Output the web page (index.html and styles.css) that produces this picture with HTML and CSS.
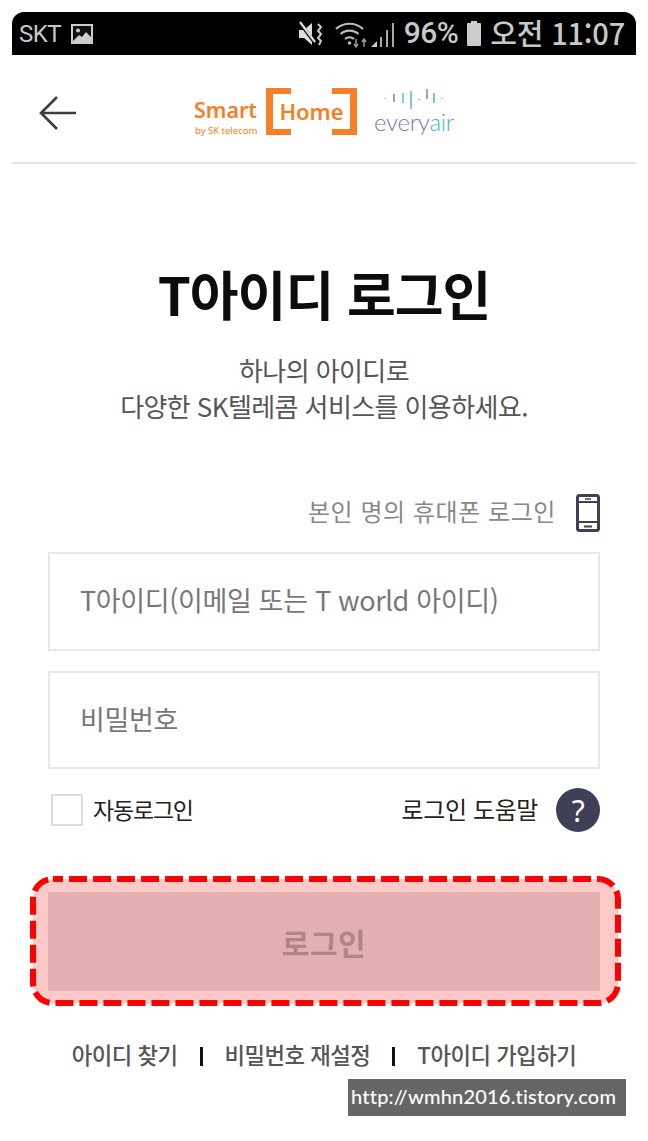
FILE: index.html
```html
<!DOCTYPE html>
<html lang="ko">
<head>
<meta charset="utf-8">
<title>T아이디 로그인</title>
<link rel="stylesheet" href="styles.css">
</head>
<body>
<div class="frame">
  <div class="status">
    <div class="status-left">
      <span class="carrier">SKT</span>
      <svg class="ico-pic" width="24" height="22" viewBox="0 0 24 22"><rect x="1" y="1" width="22" height="20" fill="#ccc"/><rect x="3" y="3" width="18" height="15" fill="#111"/><circle cx="8" cy="7.500" r="2" fill="#ccc"/><path d="M3 18l6-6 3 2 4-5 5 5v5H3z" fill="#ccc"/></svg>
    </div>
    <div class="status-right">
      <svg width="26" height="26" viewBox="0 0 26 26"><path d="M1 9h5l8-7v22l-8-7H1z" fill="#ddd"/><path d="M2 2l15 20" stroke="#000" stroke-width="3.500"/><path d="M2 1l15 20" stroke="#ddd" stroke-width="2.200"/><path d="M20 3l3 3-3 4 3 3-3 4 3 3-2 4" stroke="#ccc" stroke-width="2" fill="none"/></svg>
      <svg width="61" height="30" viewBox="0 0 61 30"><g fill="none" stroke="#bbb" stroke-width="2.200"><path d="M1 10a20 20 0 0 1 27 0"/><path d="M5.500 15a13.500 13.500 0 0 1 18 0"/><path d="M10 20a7 7 0 0 1 9 0"/></g><circle cx="14.500" cy="24" r="1.800" fill="#bbb"/><path d="M21 20v7M19 25l2 3 2-3M29 28v-7M27 23l2-3 2 3" stroke="#999" stroke-width="1.500" fill="none"/><path d="M36 28l6-6v6z" fill="#ccc"/><path d="M46 28V18M52 28V11M58 28V4" stroke="#aaa" stroke-width="2"/></svg>
      <span class="pct">96%</span>
      <svg width="16" height="25" viewBox="0 0 16 25"><rect x="5" y="0" width="6" height="3" fill="#ccc"/><rect x="1" y="2" width="14" height="23" rx="1" fill="#ccc"/></svg>
      <span class="clock">오전 11:07</span>
    </div>
  </div>

  <header class="topbar">
    <svg class="back" width="40" height="36" viewBox="0 0 40 36"><path d="M38 18H3M19 2L3 18l16 16" fill="none" stroke="#3c3c3c" stroke-width="2.600"/></svg>
    <div class="logos">
      <div class="sk">
        <span class="sk-smart">Smart</span>
        <span class="sk-by">by SK telecom</span>
      </div>
      <div class="home"><span>Home</span></div>
      <div class="every">
        <svg width="60" height="22" viewBox="0 0 60 22"><g fill="none" stroke-width="1.600"><path d="M1 11v1" stroke="#8fc4d4"/><path d="M10 7v8" stroke="#8a80b0"/><path d="M19 6v10" stroke="#6fbcc8"/><path d="M27 4v18" stroke="#5fb7c4"/><path d="M35 12v1" stroke="#8a80b0"/><path d="M43 2v10" stroke="#7f8fbb"/><path d="M50 6v10" stroke="#5fb7c4"/><path d="M58 11v1" stroke="#8fc4d4"/></g></svg>
        <span class="every-txt">every<em>air</em></span>
      </div>
    </div>
  </header>

  <main class="content">
    <h1 class="title">T아이디 로그인</h1>
    <p class="sub">하나의 아이디로<br>다양한 SK텔레콤 서비스를 이용하세요.</p>

    <div class="phone-login">
      <span class="phone-txt">본인 명의 휴대폰 로그인</span>
      <svg width="24" height="38" viewBox="0 0 24 38"><rect x="1.500" y="1.500" width="21" height="35" rx="2" fill="#fff" stroke="#3f3f57" stroke-width="3"/><path d="M2 8h20M2 28h20" stroke="#3f3f57" stroke-width="2"/><path d="M9 5h6" stroke="#3f3f57" stroke-width="1.500"/><path d="M8 32.500h8" stroke="#3f3f57" stroke-width="2"/></svg>
    </div>

    <div class="field field-id">T아이디(이메일 또는 T world 아이디)</div>
    <div class="field field-pw">비밀번호</div>

    <div class="opts">
      <div class="auto"><span class="check"></span><span class="opt-txt">자동로그인</span></div>
      <div class="help"><span class="opt-txt">로그인 도움말</span><span class="q">?</span></div>
    </div>

    <div class="btn-wrap">
      <svg class="mark" width="591" height="130" viewBox="0 0 591 130"><rect x="3" y="3" width="585" height="124" rx="20" fill="#ffc9c8" stroke="#fe0000" stroke-width="6" stroke-dasharray="18 6" stroke-dashoffset="-16"/></svg>
      <div class="btn">로그인</div>
    </div>

    <nav class="links">
      <span>아이디 찾기</span><i></i><span>비밀번호 재설정</span><i></i><span>T아이디 가입하기</span>
    </nav>
  </main>
</div>
<div class="wm">http://wmhn2016.tistory.com</div>
</body>
</html>
```

FILE: styles.css
```css
* { box-sizing: border-box; }
html, body { margin: 0; padding: 0; background: #fff; }
body {
  width: 648px;
  height: 1141px;
  overflow: hidden;
  position: relative;
  font-family: "Noto Sans CJK KR", "Noto Sans", sans-serif;
}
.frame { width: 624px; margin: 12px 0 0 12px; }

.status {
  height: 43px;
  background: #000;
  border-radius: 12px 12px 0 0;
  display: flex;
  justify-content: space-between;
  align-items: center;
  padding: 0 11px 0 7px;
  color: #c8c8c8;
  font-family: "Roboto", "Noto Sans CJK KR", sans-serif;
}
.status-left { display: flex; align-items: center; gap: 9px; font-size: 24px; }
.carrier { letter-spacing: -0.5px; }
.ico-pic { margin-top: 1px; }
.status-right { display: flex; align-items: center; gap: 8px; }
.status-right > svg:first-child { margin-right: 3px; }
.pct { font-size: 30px; line-height: 36px; font-weight: 500; letter-spacing: -0.5px; margin-top: -2px; }
.clock { font: 500 29px/36px "Noto Sans CJK KR", sans-serif; letter-spacing: -0.2px; margin-top: -4px; }

.topbar {
  height: 109px;
  border-bottom: 2px solid #e4e4e4;
  display: flex;
  align-items: center;
  padding: 6px 0 0 26px;
}
.back { flex: none; margin-top: 3px; }
.logos { display: flex; align-items: center; margin-left: 116px; }
.sk { display: flex; flex-direction: column; gap: 3px; width: 71px; color: #f58025; font-family: "Noto Sans", sans-serif; padding-top: 11px; }
.sk-smart { font-size: 21.500px; font-weight: 600; line-height: 24px; }
.sk-by { font-size: 9.500px; line-height: 12px; white-space: nowrap; padding-left: 1px; }
.home {
  width: 91px;
  height: 47px;
  margin-left: 1px;
  display: flex;
  align-items: center;
  justify-content: center;
  color: #f58025;
  font: 600 22px "Noto Sans", sans-serif;
  border-left: 7px solid #f58025;
  border-right: 7px solid #f58025;
  background:
    linear-gradient(#f58025, #f58025) 0 0 / 18px 6px no-repeat,
    linear-gradient(#f58025, #f58025) 100% 0 / 18px 6px no-repeat,
    linear-gradient(#f58025, #f58025) 0 100% / 18px 6px no-repeat,
    linear-gradient(#f58025, #f58025) 100% 100% / 18px 6px no-repeat;
}
.home span { margin-top: -1px; }
.every { display: flex; flex-direction: column; align-items: center; margin-left: 17px; margin-top: -2px; }
.every-txt { font: 300 24px/26px "Lato", sans-serif; color: #7b7aa6; letter-spacing: -0.3px; }
.every-txt em { font-style: normal; color: #48b6bf; }

.content { display: flex; flex-direction: column; align-items: center; }
.title {
  margin: 93px 0 0;
  font-size: 53px;
  line-height: 72px;
  font-weight: 700;
  color: #0c0c0c;
  letter-spacing: -1px;
}
.sub {
  margin: 23px 0 0;
  font-size: 26px;
  line-height: 36px;
  color: #555;
  text-align: center;
  letter-spacing: -0.6px;
}
.phone-login {
  align-self: flex-end;
  margin: 70px 36px 0 0;
  display: flex;
  align-items: center;
  gap: 20px;
  color: #888;
  font-size: 24px;
  height: 38px;
  letter-spacing: 0.55px;
}
.phone-txt { margin-top: -6px; }
.field {
  width: 552px;
  height: 98px;
  border: 2px solid #e8e8e8;
  display: flex;
  align-items: center;
  padding: 0 0 4px 30px;
  color: #777;
  font-size: 27px;
  letter-spacing: -0.35px;
}
.field-id { height: 99px; margin-top: 20px; }
.field-pw { margin-top: 20px; }
.opts {
  width: 552px;
  height: 48px;
  margin-top: 17px;
  display: flex;
  justify-content: space-between;
  align-items: center;
  color: #222;
  font-size: 23px;
  letter-spacing: -1.2px;
}
.opt-txt { margin-top: -3px; }
.auto { display: flex; align-items: center; gap: 10px; padding-left: 3px; }
.check { width: 32px; height: 32px; border: 2px solid #ddd; background: #fff; }
.help { display: flex; align-items: center; gap: 18px; font-size: 24px; letter-spacing: -0.4px; }
.q {
  width: 44px;
  height: 44px;
  border-radius: 50%;
  background: #3f3f57;
  color: #fff;
  display: flex;
  align-items: center;
  justify-content: center;
  font: 400 30px "Noto Sans", sans-serif;
}
.btn-wrap {
  width: 591px;
  height: 130px;
  margin: 42px 0 0 3px;
  position: relative;
  padding: 16px 0 0 18px;
}
.btn {
  position: relative;
  width: 552px;
  height: 99px;
  background: #e3b0b2;
  color: #b18487;
  font-size: 30px;
  font-weight: 700;
  letter-spacing: 0.5px;
  display: flex;
  align-items: center;
  justify-content: center;
}
.mark { position: absolute; left: 0; top: 0; }
.links {
  margin-top: 31px;
  display: flex;
  align-items: center;
  gap: 22px;
  color: #555;
  font-size: 22.300px;
  font-weight: 500;
  letter-spacing: -0.5px;
  line-height: 34px;
  height: 34px;
}
.links i { display: block; width: 3px; height: 19px; background: #111; margin-top: 5px; }

.wm {
  position: absolute;
  left: 348px;
  top: 1079px;
  width: 278px;
  height: 37px;
  background: #666;
  color: #fff;
  font: 500 20px/35px "Lato", sans-serif;
  letter-spacing: 0.2px;
  padding-left: 3px;
  white-space: nowrap;
}
```
